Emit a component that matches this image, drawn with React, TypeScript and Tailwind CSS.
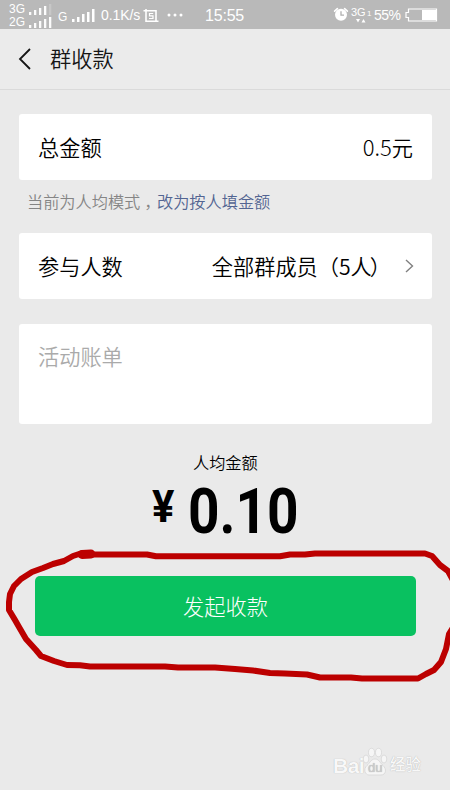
import React from "react";

function Signal({ bars, faint = 0 }: { bars: number[]; faint?: number }) {
  return (
    <svg width="23" height="12" viewBox="0 0 23 12" className="shrink-0">
      {bars.map((h, i) => (
        <rect key={i} x={i * 5} y={12 - h} width="2.3" height={h} fill="#fff" opacity={i >= bars.length - faint ? 0.2 : 0.95} />
      ))}
    </svg>
  );
}

function StatusBar() {
  return (
    <div className="flex h-[29px] items-center bg-[#b9b9b9] text-white">
      <div className="ml-[9px] flex w-[43px] shrink-0 flex-col pt-[2px]">
        <div className="flex h-[13px] items-center gap-[4px] text-[12px] leading-[13px]">
          <span className="w-[16px]">3G</span>
          <Signal bars={[3, 5, 7, 9, 11]} faint={1} />
        </div>
        <div className="flex h-[13px] items-center gap-[4px] text-[12px] leading-[13px]">
          <span className="w-[16px]">2G</span>
          <Signal bars={[3, 5, 7, 9, 11]} />
        </div>
      </div>
      <span className="ml-[6px] mt-[4px] w-[13px] shrink-0 text-[12px]">G</span>
      <svg width="24" height="14" viewBox="0 0 24 14" className="mt-px shrink-0">
        {[3, 5, 8, 10, 13].map((h, i) => (
          <rect key={i} x={1 + i * 5} y={14 - h} width="2.5" height={h} fill="#fff" />
        ))}
      </svg>
      <span className="ml-[6px] mt-[2px] w-[42px] shrink-0 whitespace-nowrap text-[14px] tracking-[-0.1px]">0.1K/s</span>
      <svg width="16" height="14" viewBox="0 0 16 14" className="mt-[2px] shrink-0" fill="none" stroke="#fff">
        <path d="M0.500 1.700H13V13M3 0V12.300H15.500" strokeWidth="1.600" />
        <path d="M10.200 4.500H6.500V6.900H10V9.500H6" strokeWidth="1.200" />
      </svg>
      <svg width="16" height="4" viewBox="0 0 16 4" className="ml-[8px] shrink-0" fill="#fff">
        <circle cx="2" cy="2" r="1.5" />
        <circle cx="8" cy="2" r="1.5" />
        <circle cx="14" cy="2" r="1.5" />
      </svg>
      <span className="ml-[22px] mt-[2px] w-[41px] shrink-0 whitespace-nowrap text-[16px] tracking-[-0.2px]">15:55</span>
      <svg width="16" height="15" viewBox="0 0 16 15" className="ml-[87px] shrink-0">
        <circle cx="8" cy="7.8" r="6" fill="#fff" />
        <path d="M1.6 4.2L4.4 1.6M14.4 4.2L11.6 1.6" stroke="#fff" strokeWidth="1.6" strokeLinecap="round" />
        <path d="M8 4.2V8.2H11" stroke="#b0b0b0" strokeWidth="1.3" fill="none" />
      </svg>
      <div className="ml-[2px] flex w-[21px] shrink-0 flex-col">
        <div className="flex h-[11px] items-end text-[11px] leading-[11px]">
          <span className="w-[16px] tracking-[-0.2px]">3G</span>
          <span className="text-[8px] leading-[8px]">1</span>
        </div>
        <svg width="14" height="5" viewBox="0 0 14 5" className="ml-[4px]" fill="#fff">
          <path d="M1 1H5L3 4.5ZM6.500 4.500H10.500L8.500 1Z" />
        </svg>
      </div>
      <span className="ml-[2px] mt-[2px] w-[28px] shrink-0 whitespace-nowrap text-[14px] tracking-[-0.5px]">55%</span>
      <svg width="33" height="14" viewBox="0 0 33 14" className="ml-[3px] shrink-0">
        <path d="M3.500 1H31.500V13H3.500V9.500H1V4.500H3.500Z" fill="none" stroke="#fff" strokeWidth="1.200" />
        <rect x="17" y="2" width="14" height="10" fill="#fff" />
      </svg>
    </div>
  );
}

function Watermark() {
  return (
    <div className="ml-[333px] mt-[108px] flex h-[32px] w-[90px] items-end text-[#f8f8f8] [text-shadow:0_0_1px_#a8a8a8]">
      <span className="w-[29px] text-[21px] font-bold leading-[21px] tracking-[-0.5px]">Bai</span>
      <svg width="26" height="29" viewBox="0 0 26 29" className="shrink-0" fill="#f6f6f6" stroke="#d2d2d2" strokeWidth="0.7">
        <ellipse cx="4" cy="12" rx="2.800" ry="4" />
        <ellipse cx="9.500" cy="5.500" rx="3" ry="4.200" />
        <ellipse cx="16.500" cy="5.500" rx="3" ry="4.200" />
        <ellipse cx="22" cy="12" rx="2.800" ry="4" />
        <path d="M13 12C9 12 8 16 5 18.500C1 22 3 28 7 28H19C24 28 25 22 21 18.500C18 16 17 12 13 12Z" />
        <text x="6" y="25" fontSize="13" fill="#cccccc" stroke="none">du</text>
      </svg>
      <span className="ml-[2px] whitespace-nowrap text-[15.5px] font-medium leading-[22px]">经验</span>
    </div>
  );
}

export default function App() {
  return (
    <div className="relative h-[790px] w-[450px] overflow-hidden bg-[#eaeaea] font-['Liberation_Sans','Noto_Sans_CJK_SC',sans-serif] text-black">
      <StatusBar />
      <header className="flex h-[61px] items-center border-b border-[#dadada] bg-[#ebebeb]">
        <svg width="13" height="22" viewBox="0 0 13 22" className="ml-[18px]" fill="none" stroke="#151515" strokeWidth="1.800">
          <path d="M12 1L2 11L12 21" />
        </svg>
        <h1 className="ml-[19px] pt-px text-[21.2px] font-[350] text-[#151515]">群收款</h1>
      </header>

      <main className="px-[19px] pt-[24px]">
        <section className="flex h-[66px] w-[413px] items-baseline justify-between rounded-[3px] bg-white px-[19px] pt-[16px] text-[21.2px] font-[350] leading-[32px]">
          <span>总金额</span>
          <span>
            <span className="font-['Noto_Sans_CJK_SC'] text-[22px] font-light">0.5</span>元
          </span>
        </section>
        <p className="ml-[8px] mt-[10px] flex h-[24px] whitespace-nowrap text-[16.2px] font-[350] leading-[24px] text-[#858585]">
          <span className="w-[113px]">当前为人均模式</span>
          <span className="w-[17px] pt-[4px] font-['Noto_Sans_CJK_TC']">，</span>
          <span className="text-[#536592]">改为按人填金额</span>
        </p>
        <section className="mt-[19px] flex h-[66px] w-[413px] items-baseline rounded-[3px] bg-white pl-[19px] pr-[18px] pt-[17px] text-[21.2px] font-[350] leading-[32px]">
          <span className="flex-1">参与人数</span>
          <span className="whitespace-nowrap">
            全部群成员（<span className="font-['Noto_Sans_CJK_SC']">5</span>人<span className="-ml-[2px]">）</span>
          </span>
          <svg width="9" height="14" viewBox="0 0 9 14" className="ml-[14px] mt-[9px] self-start" fill="none" stroke="#808080" strokeWidth="1.400">
            <path d="M1 1L7.500 7L1 13" />
          </svg>
        </section>
        <section className="mt-[25px] h-[100px] w-[413px] rounded-[3px] bg-white px-[19px] pt-[18px] text-[21.2px] font-[350] leading-[32px] text-[#aaa]">
          活动账单
        </section>
        <p className="mt-[27px] h-[24px] pl-[174px] text-[16.2px] font-[350] leading-[24px]">人均金额</p>
        <div className="flex h-[62px] pl-[132.5px] font-['Roboto'] font-bold">
          <span className="mt-[10px] w-[36.5px] text-[44px] leading-[44px]">
            <span className="block w-[27px] origin-left scale-x-[0.95]">¥</span>
          </span>
          <span className="mt-[5px] block origin-left scale-x-[0.88] whitespace-nowrap text-[62.5px] leading-[64px]">
            0.10
          </span>
        </div>
        <button className="ml-[16px] mt-[39px] flex h-[60px] w-[381px] items-center justify-center rounded-[5px] bg-[#09c160] pt-[3px] text-[21.2px] font-light text-white">
          发起收款
        </button>
      </main>

      <Watermark />

      <svg width="450" height="150" viewBox="0 540 450 150" className="pointer-events-none absolute left-0 top-[540px]" fill="none" stroke="#bc0000" strokeWidth="6" strokeLinejoin="round" strokeLinecap="round">
        <path d="M91 554.500H147L156 556.300H280L290 554.500H305L315 553.500H425L432 556L440 565L448 571L454 582M454 626L449 634L446 649L441 662L434 670L426 674L418 678.500H362L351 677.500H320L307 674.500L285 673.500L270 673L253 670.500L235 669L215 667.500H178L165 666.500H90L80 665.300L67 665L54 661L41 656L36 650L26 639L19 627L15 620L9 610L9 602L10 594L14 586L21 579L32 572L43 568L53 564L64 561L73 556L82 553" />
        <path d="M82 554.500L91 554" strokeWidth="9" />
      </svg>
    </div>
  );
}
